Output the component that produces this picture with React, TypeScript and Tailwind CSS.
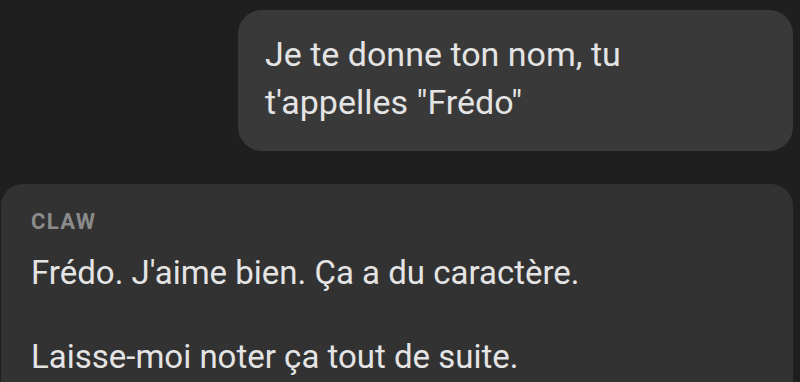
const App = () => {
  return (
    <div className="h-[382px] w-[800px] overflow-hidden bg-[#1f1f1f] font-['Roboto',sans-serif] text-[#e4e4e4]">
      <div className="flex justify-end pt-[10px] pr-[7px]">
        <div className="w-[555px] rounded-[24px] bg-[#393939] px-[27px] pt-[20px] pb-[25px] text-[34px] leading-[48px]">
          <p className="max-w-[420px]">Je te donne ton nom, tu t'appelles "Frédo"</p>
        </div>
      </div>
      <div className="mt-[33px] ml-[1px] mr-[7px] rounded-t-[22px] bg-[#323232] px-[30px] pt-[24px] pb-[30px]">
        <div className="text-[22px] font-bold tracking-[0.06em] leading-[28px] text-[#8b8b8b]">CLAW</div>
        <div className="mt-[16px] text-[33px] leading-[42px] whitespace-pre-line">
          {"Frédo. J'aime bien. Ça a du caractère.\n\nLaisse-moi noter ça tout de suite."}
        </div>
      </div>
    </div>
  );
};

export default App;
